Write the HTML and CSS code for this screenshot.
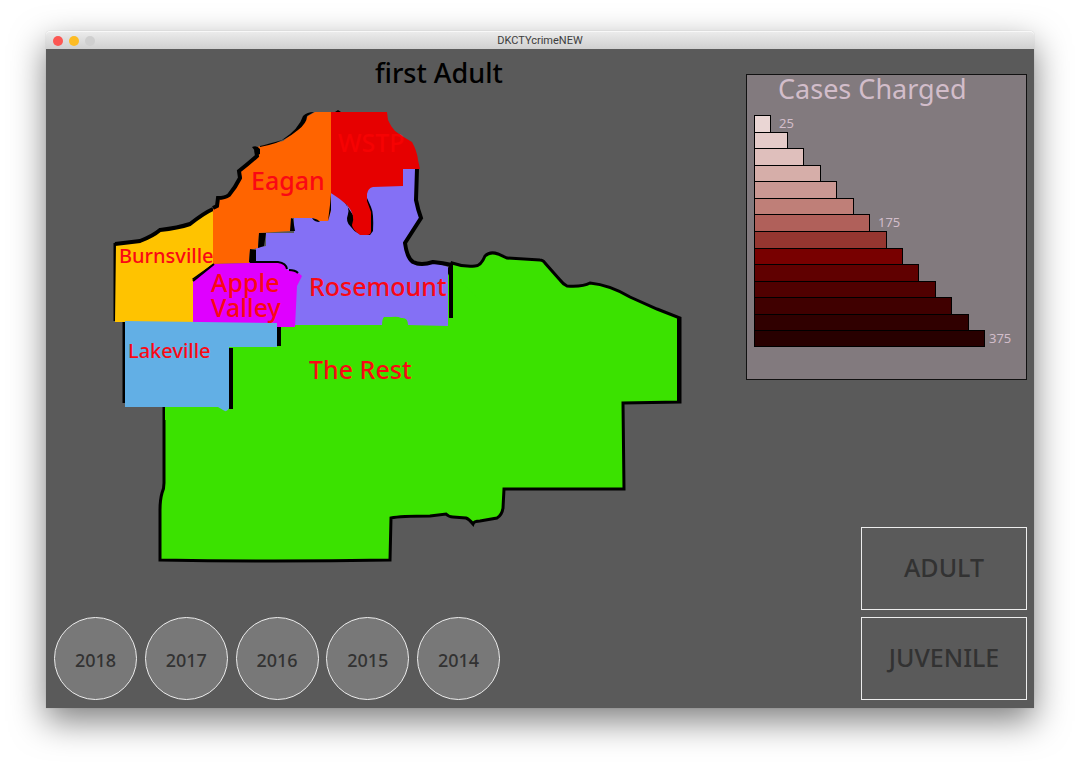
FILE: index.html
```html
<!DOCTYPE html>
<html lang="en">
<head>
<meta charset="utf-8">
<meta name="viewport" content="width=device-width, initial-scale=1">
<title>DKCTYcrimeNEW</title>
<link rel="stylesheet" href="styles.css">
</head>
<body class="desktop">
<div class="window">
  <header class="titlebar">
    <div class="controls">
      <button class="dot dot-close" type="button" aria-label="Close"></button>
      <button class="dot dot-minimize" type="button" aria-label="Minimize"></button>
      <button class="dot dot-zoom" type="button" aria-label="Zoom" disabled></button>
    </div>
    <span class="window-title">DKCTYcrimeNEW</span>
  </header>
  <main class="stage">
    <section class="main-column">
      <h1 class="heading">first Adult</h1>
      <svg class="map" viewBox="54 97 692 512" role="img" aria-label="County map">
        <!-- county outline -->
        <path class="rest" d="M164 380V483Q164 489 162 493Q160 500 160 510V560Q273 562 390 560L391 518Q400 516 430 516L446 514Q449 517 453 517L466 518Q469 519 473 524Q474 521 480 521L497 518Q502 515 503 508L504 489H624L623 403L680 402V318L657 309L630 297Q610 285 590 283Q583 287 567 286Q563 284 560 280L545 263Q543 260 540 260L507 258L498 254Q490 251 485 256Q481 266 475 266Q463 267 452 263L440 290L280 310L220 340Z"/>
        <path class="rest-inner" d="M165 407H231V348H279V322H449V270L480 300V420H165Z"/>
        <path class="edge edge-wide" d="M231 348V409M279 323V346M451 264V318M679 318V403"/>
        <path class="edge" d="M124 321V403M115 243V321"/>
        <!-- Rosemount -->
        <path class="purple" d="M256 262V248L266 246V233H294V218H328L331 193L347 200L367 188L403 169H417L415 200L420 218L404 243L409 260Q413 265 420 266L433 262L448 267V326L408 325Q408 317 401 318Q398 316 391 317L384 317Q382 319 382 325H295L280 290Z"/>
        <path class="edge edge-wide" d="M417 169L416 200Q418 210 421 218L405 243Q407 258 413 262Q421 266 433 262Q443 263 452 265"/>
        <!-- Burnsville -->
        <path class="yellow" d="M116 243L140 241L160 231L190 225L213 209V265L193 280V322H115Z"/>
        <path class="edge edge-wide" d="M115 244L140 241Q153 236 160 230Q178 228 190 224Q204 213 213 209"/>
        <path class="edge" d="M193 280L214 265"/>
        <!-- Eagan -->
        <path class="orange" d="M213 209L217 206L218 198L228 197L242 177L239 170L260 152L257 147L283 141L300 128L308 116L315 112H331L331 208Q330 217 328 221H318Q315 218 312 218H292L291 231L259 233L258 248L250 250L249 263L213 264Z"/>
        <path class="edge edge-wide" d="M213 208L217 206L218 198Q225 198 229 195Q235 188 240 178L239 171Q248 164 257 156L256 150"/>
        <path class="ink" d="M252 147Q257 145 260 149L260 146Q268 144 282 140Q299 129 303 116Q307 112 314 112L307 116Q307 123 298 130Q285 141 269 145L260 147L260 154L255 156L255 151Z"/>
        <path class="ink" d="M259 233H266L264 246L258 248ZM250 249L256 250V262H249ZM291 218L293 219L295 231H290ZM312 218Q318 219 320 222Q314 222 312 218ZM331 194L331 210L328 221L330 205ZM335 112L338 110L341 112Z"/>
        <!-- WSTP -->
        <path class="ink" d="M343 200Q350 207 348 214Q345 222 351 227Q357 236 370 235L373 231Q374 213 371 207L367 198L363 230Z"/>
        <path class="red" d="M331 112H387L388 120Q391 127 395 131L402 136L412 142Q417 151 418 160L420 169H403V186L373 187Q368 188 367 194V201L371 212V231Q371 235 367 235H360Q352 229 352 225Q356 215 347 205Q339 198 331 193Z"/>
        <!-- Apple Valley -->
        <path class="magenta" d="M193 280L214 264L249 263H278Q286 263 287 270Q296 269 302 276L297 286L295 327H277V323H193Z"/>
        <path class="edge edge-thin" d="M250 262L278 262Q286 263 287 269M289 270Q295 270 298 273M193 281L214 264"/>
        <!-- Lakeville -->
        <path class="blue" d="M125 321L277 323V347H229V408Q227 413 223 410L218 407H125Z"/>
        <g class="labels">
          <text class="faint" x="338" y="152">WSTP</text>
          <text x="251" y="190">Eagan</text>
          <text class="small" x="119" y="263">Burnsville</text>
          <text x="211" y="292">Apple</text>
          <text x="211" y="317">Valley</text>
          <text x="309" y="296">Rosemount</text>
          <text class="small" x="128" y="358">Lakeville</text>
          <text x="309" y="379">The Rest</text>
        </g>
      </svg>
      <nav class="years" aria-label="Year">
        <button class="year" type="button">2018</button>
        <button class="year" type="button">2017</button>
        <button class="year" type="button">2016</button>
        <button class="year" type="button">2015</button>
        <button class="year" type="button">2014</button>
      </nav>
    </section>
    <aside class="side-column">
      <section class="legend">
        <h2 class="legend-title">Cases Charged</h2>
        <ol class="scale">
          <li class="step"><span class="bar" style="width:17px;background:#ead6d4"></span><span class="value">25</span></li>
          <li class="step"><span class="bar" style="width:34px;background:#e5cbc9"></span></li>
          <li class="step"><span class="bar" style="width:50px;background:#dfbfbc"></span></li>
          <li class="step"><span class="bar" style="width:67px;background:#d6aea9"></span></li>
          <li class="step"><span class="bar" style="width:83px;background:#ca9893"></span></li>
          <li class="step"><span class="bar" style="width:100px;background:#bf7f78"></span></li>
          <li class="step"><span class="bar" style="width:116px;background:#b0605a"></span><span class="value">175</span></li>
          <li class="step"><span class="bar" style="width:133px;background:#953630"></span></li>
          <li class="step"><span class="bar" style="width:149px;background:#780000"></span></li>
          <li class="step"><span class="bar" style="width:165px;background:#600000"></span></li>
          <li class="step"><span class="bar" style="width:182px;background:#500000"></span></li>
          <li class="step"><span class="bar" style="width:198px;background:#400000"></span></li>
          <li class="step"><span class="bar" style="width:215px;background:#300000"></span></li>
          <li class="step"><span class="bar" style="width:231px;background:#280000"></span><span class="value">375</span></li>
        </ol>
      </section>
      <div class="modes">
        <button class="mode" type="button">ADULT</button>
        <button class="mode" type="button">JUVENILE</button>
      </div>
    </aside>
  </main>
</div>
</body>
</html>
```
FILE: styles.css
```css
* { box-sizing: border-box; }
.desktop {
  margin: 0;
  min-height: 100vh;
  padding: 31px 46px 61px;
  display: flex;
  background: #fff;
  font-family: "Noto Sans", "Open Sans", sans-serif;
}
.window {
  flex: 1;
  display: flex;
  flex-direction: column;
  border-radius: 4px 4px 0 0;
  box-shadow: 0 13px 34px rgba(0, 0, 0, 0.5), 0 0 1px rgba(0, 0, 0, 0.3);
}
.titlebar {
  display: grid;
  grid-template-columns: 1fr auto 1fr;
  align-items: center;
  height: 18px;
  padding: 0 7px;
  border-radius: 4px 4px 0 0;
  border-top: 1px solid #f8f8f8;
  background: linear-gradient(#ebebeb, #d0d0d0);
}
.controls { display: flex; gap: 6px; }
.dot {
  width: 10px;
  height: 10px;
  padding: 0;
  border: 0;
  border-radius: 50%;
}
.dot-close { background: #fc5753; }
.dot-minimize { background: #fdbc24; }
.dot-zoom { background: #cfcfcf; }
.window-title {
  font-family: Roboto, Inter, sans-serif;
  font-size: 11px;
  line-height: 16px;
  color: #3d3d3d;
}
.stage {
  flex: 1;
  display: grid;
  grid-template-columns: 1fr 281px;
  padding: 8px 7px 8px 8px;
  background: #5a5a5a;
}
.main-column { display: flex; flex-direction: column; min-width: 0; }
.heading {
  margin: 0;
  padding: 0 0 8px 321px;
  font-size: 27px;
  font-weight: 500;
  line-height: 32px;
  color: #000;
  white-space: nowrap;
}
.map { display: block; width: 100%; height: auto; }
.rest { fill: #3be200; stroke: #000; stroke-width: 3; }
.rest-inner { fill: #3be200; }
.edge { fill: none; stroke: #000; stroke-width: 3; }
.edge-wide { stroke-width: 4; }
.edge-thin { stroke-width: 2; }
.ink { fill: #000; }
.purple { fill: #8470f5; }
.yellow { fill: #ffc300; }
.orange { fill: #ff6400; }
.red { fill: #e60000; }
.magenta { fill: #df00ff; }
.blue { fill: #62afe5; }
.labels { fill: #fa0814; font-size: 25px; font-weight: 500; }
.small { font-size: 20px; }
.faint { fill: #f60202; }
.years {
  display: flex;
  justify-content: space-between;
  width: 446px;
  margin-top: auto;
}
.year {
  width: 83px;
  height: 83px;
  padding: 2px 0 0;
  border: 1px solid #ededed;
  border-radius: 50%;
  background: #787878;
  color: #323232;
  font: 500 18px "Noto Sans", sans-serif;
}
.side-column {
  display: flex;
  flex-direction: column;
  justify-content: space-between;
  padding-top: 17px;
}
.legend {
  padding: 0 7px 32px;
  border: 1px solid #111;
  background: #827a7e;
  color: #d2bdca;
}
.legend-title {
  margin: 0;
  padding: 0 24px 12px;
  font-size: 27px;
  font-weight: 400;
  line-height: 28px;
  white-space: nowrap;
}
.scale {
  display: grid;
  grid-template-rows: repeat(14, 1fr);
  height: 232px;
  margin: 0;
  padding: 0;
  list-style: none;
}
.step { display: flex; gap: 8px; min-height: 0; }
.step:last-child { gap: 4px; }
.bar { border: 1px solid #000; border-bottom: 0; }
.step:last-child .bar { border-bottom: 1px solid #000; }
.value { font-size: 13px; line-height: 16px; }
.modes { display: grid; gap: 7px; padding-left: 115px; }
.mode {
  height: 83px;
  padding: 0 0 4px;
  border: 1px solid #ededed;
  background: transparent;
  color: #323232;
  font: 500 25px "Noto Sans", sans-serif;
}
```
